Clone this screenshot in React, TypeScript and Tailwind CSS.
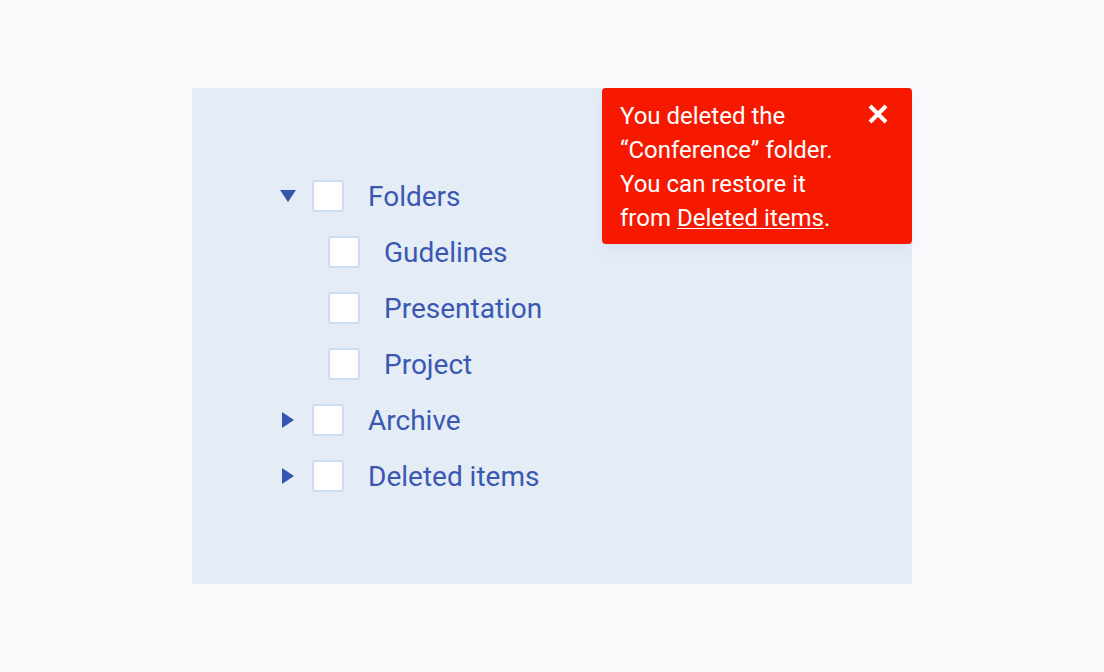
import React from 'react';

const ArrowDown = () => (
    <svg width="16" height="16" viewBox="0 0 16 16" className="block">
        <path d="M0 2h16L8 14z" fill="#3654b0" />
    </svg>
);

const ArrowRight = () => (
    <svg width="16" height="16" viewBox="0 0 16 16" className="block">
        <path d="M2 0l12 8-12 8z" fill="#3654b0" />
    </svg>
);

interface RowProps {
    label: string;
    arrow?: 'down' | 'right';
}

const Row: React.FC<RowProps> = ({label, arrow}) => (
    <div className="flex h-14 items-center">
        {arrow ? (
            <div className="mr-4 w-4">{arrow === 'down' ? <ArrowDown /> : <ArrowRight />}</div>
        ) : (
            <div className="w-[48px]" />
        )}
        <div className="h-8 w-8 rounded-[4px] border-2 border-[#cfdbee] bg-white" />
        <span className="ml-6 pt-0.5 text-[28px] leading-8 text-[#3a58b2]">{label}</span>
    </div>
);

const App = () => {
    return (
        <div className="flex h-[672px] w-[1104px] items-start justify-center bg-[#f9fafc] pt-[88px] font-['Roboto',sans-serif]">
            <div className="relative h-[496px] w-[720px] bg-[#e4ecf6] pt-20 pl-[88px]">
                <Row label="Folders" arrow="down" />
                <Row label="Gudelines" />
                <Row label="Presentation" />
                <Row label="Project" />
                <Row label="Archive" arrow="right" />
                <Row label="Deleted items" arrow="right" />

                <div className="absolute top-0 right-0 h-[156px] w-[310px] rounded-[4px] bg-[#f61900] py-[11px] pl-[18px] text-[24px] leading-[34px] text-white shadow-[0_6px_16px_rgba(54,84,176,0.06)]">
                    <p>You deleted the</p>
                    <p>“Conference” folder.</p>
                    <p>You can restore it</p>
                    <p>from <span className="underline decoration-1 underline-offset-2">Deleted items</span>.</p>
                    <svg width="20" height="20" viewBox="0 0 20 20" className="absolute top-4 right-6">
                        <path d="M2 2l16 16M18 2L2 18" stroke="#fff" strokeWidth="4" fill="none" />
                    </svg>
                </div>
            </div>
        </div>
    );
};

export default App;
